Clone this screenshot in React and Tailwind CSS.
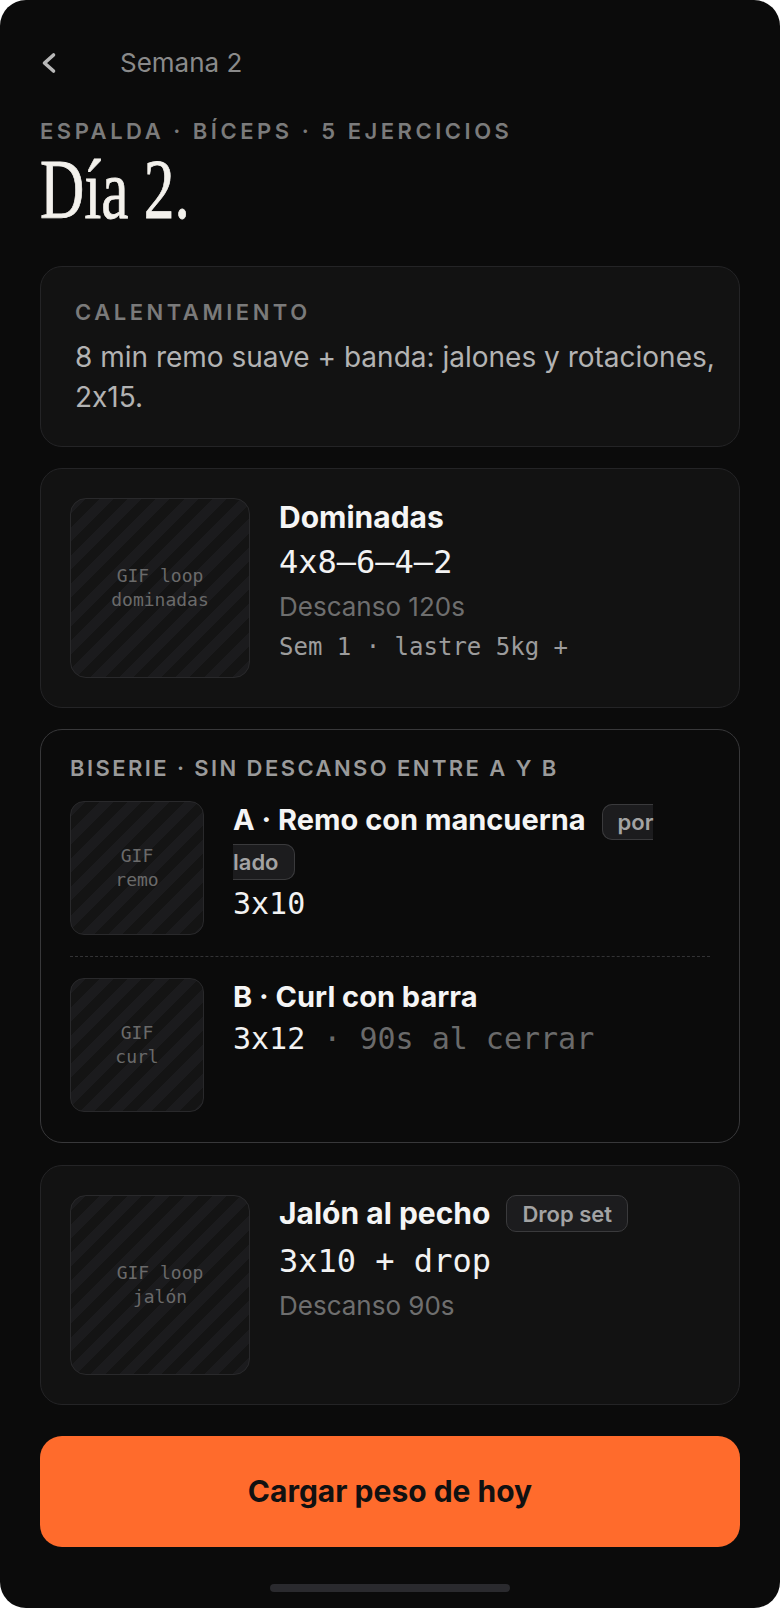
import React from "react";

const sans = "font-['Inter',sans-serif] [font-feature-settings:'calt'_0]";
const mono = "font-['DejaVu_Sans_Mono',monospace]";

function Thumb({ big, lines }) {
  return (
    <div
      className={
        (big ? "w-[180px] h-[180px] rounded-[16px] " : "w-[134px] h-[134px] rounded-[14px] ") +
        "shrink-0 border border-[#29292b] bg-[repeating-linear-gradient(135deg,#1b1b1d_0px,#1b1b1d_10px,#141414_10px,#141414_20px)] flex flex-col items-center justify-center text-center font-['DejaVu_Sans_Mono',monospace] text-[18px] leading-[24px] text-[#6a6a6a]"
      }
    >
      {lines.map((l) => (
        <div key={l}>{l}</div>
      ))}
    </div>
  );
}

function Chevron() {
  return (
    <svg width="18" height="22" viewBox="0 0 18 22" className="block">
      <polyline
        points="13.5,3 4.5,11 13.5,19"
        fill="none"
        stroke="#b8b8b8"
        strokeWidth="3.6"
        strokeLinecap="round"
        strokeLinejoin="round"
      />
    </svg>
  );
}

export default function App() {
  return (
    <div className="w-[780px] h-[1608px] bg-white">
      <div className={`w-[780px] h-[1608px] rounded-[26px] bg-[#0b0b0b] overflow-hidden px-[40px] flex flex-col ${sans}`}>
        {/* nav */}
        <div className="mt-[43px] h-[40px] flex items-center">
          <div className="w-[80px] flex items-center">
            <Chevron />
          </div>
          <div className="text-[26px] leading-[40px] text-[#8a8a8a]">Semana 2</div>
        </div>

        {/* heading */}
        <div className="mt-[35px] text-[22px] leading-[26px] font-semibold tracking-[0.16em] text-[#7b7b7b]">
          ESPALDA · BÍCEPS · 5 EJERCICIOS
        </div>
        <div className="mt-[4px] h-[84px]">
          <span className="inline-block origin-left scale-x-[0.73] font-['Liberation_Serif',serif] text-[84px] leading-[84px] text-[#f3f1ec] whitespace-nowrap [-webkit-text-stroke:0.8px_#f3f1ec]">
            Día 2.
          </span>
        </div>

        {/* warm-up */}
        <div className="mt-[34px] rounded-[22px] border border-[#242426] bg-[#121212] pt-[32px] pb-[29px] pl-[34px] pr-[24px]">
          <div className="text-[22px] leading-[26px] font-semibold tracking-[0.16em] text-[#7a7a7a]">CALENTAMIENTO</div>
          <div className="mt-[12px] text-[28px] leading-[40px] text-[#b3b3b3]">
            8 min remo suave + banda: jalones y rotaciones, 2x15.
          </div>
        </div>

        {/* Dominadas */}
        <div className="mt-[21px] rounded-[22px] border border-[#242426] bg-[#121212] p-[29px] flex gap-[29px]">
          <Thumb big lines={["GIF loop", "dominadas"]} />
          <div className="flex flex-col">
            <div className="text-[30px] leading-[38px] font-bold text-[#f5f5f5]">Dominadas</div>
            <div className={`mt-[6px] ${mono} text-[32px] leading-[40px] text-[#f2f2f2]`}>4x8–6–4–2</div>
            <div className="mt-[8px] text-[26px] leading-[34px] text-[#6e6e6e]">Descanso 120s</div>
            <div className={`mt-[7px] ${mono} text-[24px] leading-[32px] text-[#9c9c9c]`}>Sem 1 · lastre 5kg +</div>
          </div>
        </div>

        {/* Biserie */}
        <div className="mt-[21px] rounded-[22px] border border-[#38383a] bg-[#0b0b0b] pt-[25px] px-[29px] pb-[30px]">
          <div className="text-[22px] leading-[26px] font-semibold tracking-[0.11em] text-[#9a9a9a]">
            BISERIE · SIN DESCANSO ENTRE A Y B
          </div>
          <div className="mt-[20px] flex gap-[29px]">
            <Thumb lines={["GIF", "remo"]} />
            <div className="flex flex-col">
              <div className="text-[29px] leading-[37px] font-bold text-[#f5f5f5]">
                A · Remo con mancuerna
                <span className="ml-[16px] rounded-[10px] border border-[#3a3a3c] bg-[#1c1c1e] px-[15px] py-[4px] text-[22px] font-semibold text-[#a3a3a3]">
                  por
                  <br />
                  lado
                </span>
              </div>
              <div className={`mt-[4px] ${mono} text-[30px] leading-[38px] text-[#f2f2f2]`}>3x10</div>
            </div>
          </div>
          <div className="my-[21px] border-t border-dashed border-[#333335]" />
          <div className="flex gap-[29px]">
            <Thumb lines={["GIF", "curl"]} />
            <div className="flex flex-col">
              <div className="text-[29px] leading-[37px] font-bold text-[#f5f5f5]">B · Curl con barra</div>
              <div className={`mt-[5px] ${mono} text-[30px] leading-[38px] text-[#f2f2f2]`}>
                3x12<span className="text-[#6a6a6a]"> · 90s al cerrar</span>
              </div>
            </div>
          </div>
        </div>

        {/* Jalón */}
        <div className="mt-[22px] rounded-[22px] border border-[#242426] bg-[#121212] p-[29px] flex gap-[29px]">
          <Thumb big lines={["GIF loop", "jalón"]} />
          <div className="flex flex-col">
            <div className="h-[37px] flex items-center gap-[16px]">
              <div className="text-[30px] leading-[37px] font-bold text-[#f5f5f5]">Jalón al pecho</div>
              <div className="h-[37px] flex items-center rounded-[10px] border border-[#3a3a3c] bg-[#1c1c1e] px-[15px] text-[22px] leading-[26px] font-semibold text-[#a3a3a3]">
                Drop set
              </div>
            </div>
            <div className={`mt-[9px] ${mono} text-[32px] leading-[40px] text-[#f2f2f2]`}>3x10 + drop</div>
            <div className="mt-[8px] text-[26px] leading-[34px] text-[#6e6e6e]">Descanso 90s</div>
          </div>
        </div>

        {/* CTA */}
        <button className="mt-[31px] h-[111px] w-full rounded-[22px] bg-[#ff6b2c] flex items-center justify-center text-[30px] font-bold text-[#111111]">
          Cargar peso de hoy
        </button>

        <div className="mt-[37px] mx-auto w-[240px] h-[8px] rounded-full bg-[#2a2a2e]" />
      </div>
    </div>
  );
}
